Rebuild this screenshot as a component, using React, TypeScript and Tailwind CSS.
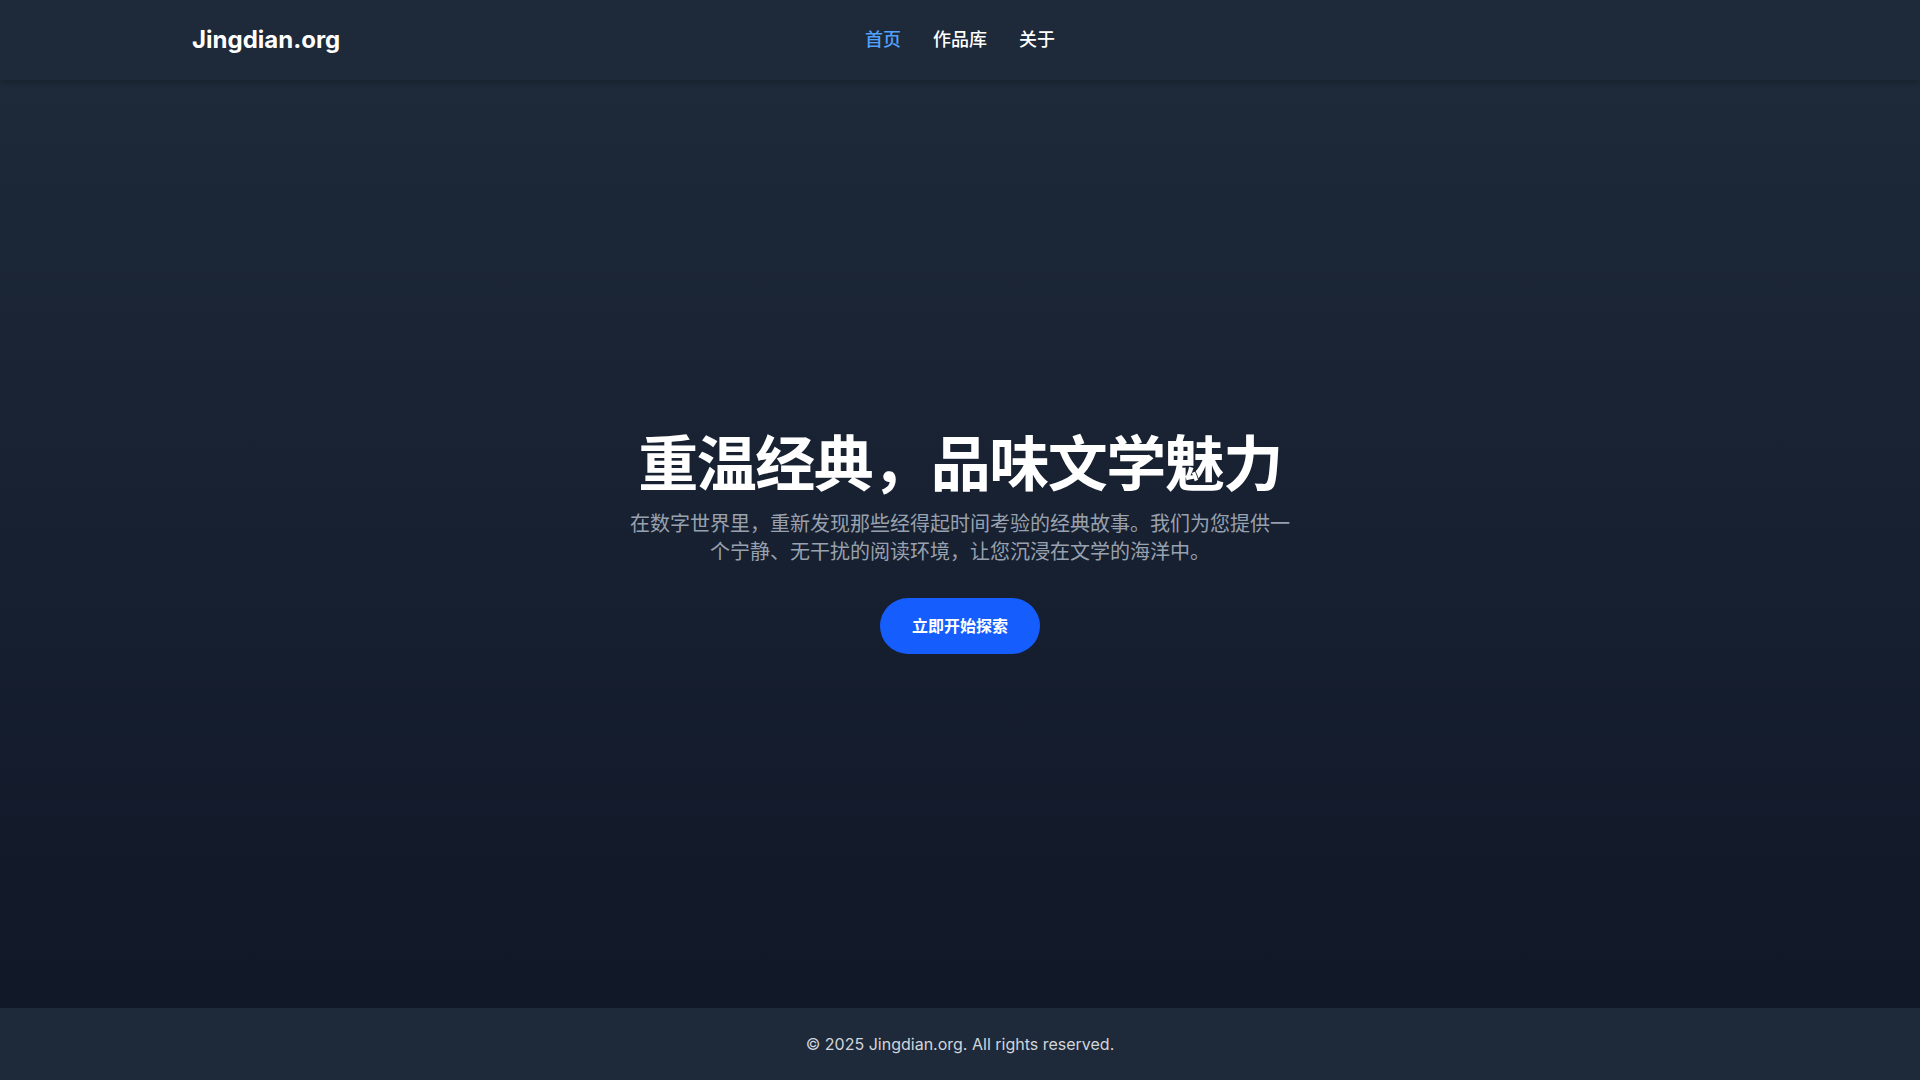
import React from "react";

export default function App() {
  return (
    <div
      className="min-h-screen flex flex-col bg-gray-900 text-white"
      style={{ fontFamily: 'Inter, "Noto Sans CJK SC", sans-serif' }}
    >
      <header className="h-20 bg-gray-800 shadow-md relative z-10">
        <div className="w-[1536px] mx-auto h-full grid grid-cols-3 items-center">
          <a className="text-2xl font-bold text-white justify-self-start">Jingdian.org</a>
          <nav className="flex items-center gap-8 justify-self-center text-lg font-medium">
            <a className="text-blue-400">首页</a>
            <a className="text-white">作品库</a>
            <a className="text-white">关于</a>
          </nav>
          <div />
        </div>
      </header>
      <main className="flex-1 flex flex-col items-center justify-center text-center bg-gradient-to-b from-gray-800 to-gray-900">
        <h1 className="text-6xl font-bold tracking-tight text-white mb-4">重温经典，品味文学魅力</h1>
        <p className="text-xl text-gray-400 max-w-2xl mb-8">
          在数字世界里，重新发现那些经得起时间考验的经典故事。我们为您提供一个宁静、无干扰的阅读环境，让您沉浸在文学的海洋中。
        </p>
        <a className="bg-blue-600 text-white font-bold px-8 py-4 rounded-full text-base">立即开始探索</a>
      </main>
      <footer className="bg-gray-800 py-6 text-center">
        <p className="text-base text-gray-300">© 2025 Jingdian.org. All rights reserved.</p>
      </footer>
    </div>
  );
}
